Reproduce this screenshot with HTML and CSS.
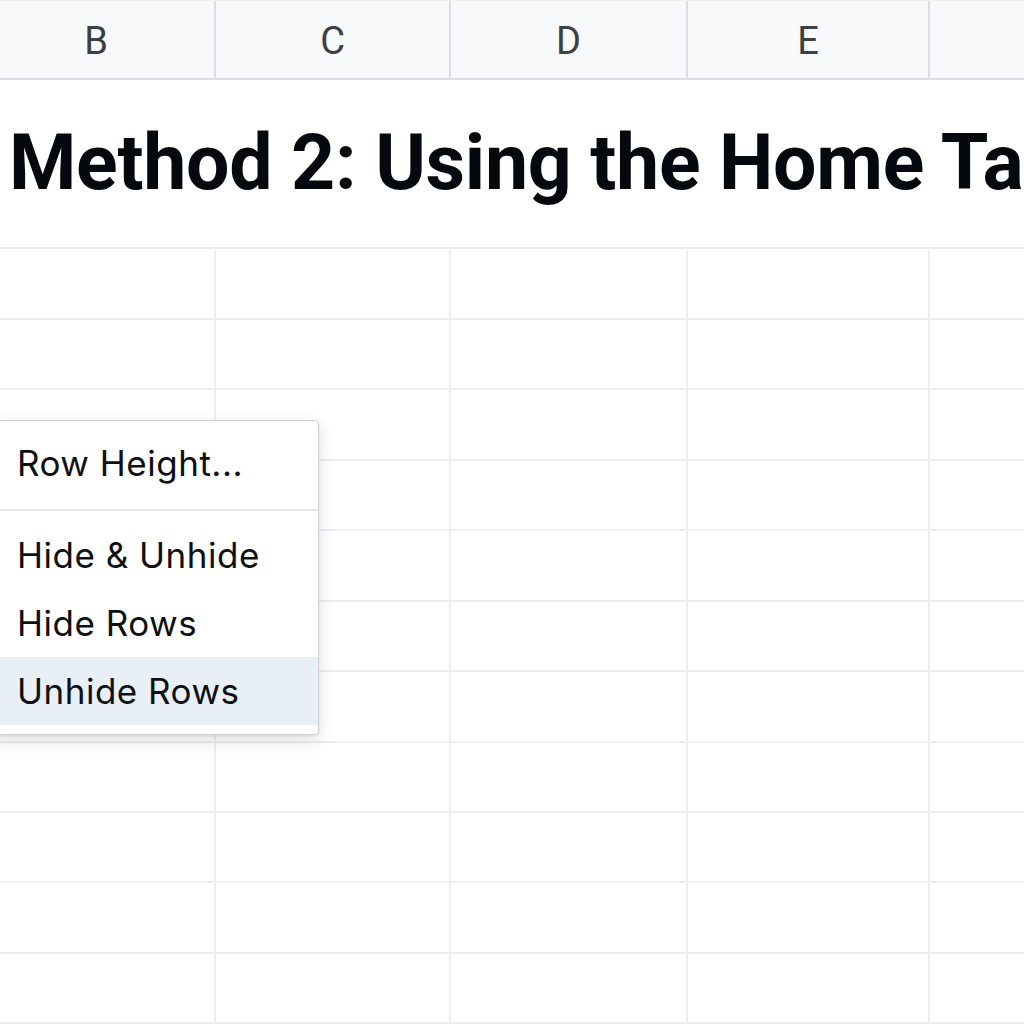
FILE: index.html
```html
<!DOCTYPE html>
<html>
<head>
<meta charset="utf-8">
<link rel="stylesheet" href="styles.css">
</head>
<body>
<div class="sheet">
  <div class="header">
    <div class="col">B</div>
    <div class="col">C</div>
    <div class="col">D</div>
    <div class="col">E</div>
    <div class="col last"></div>
  </div>
  <div class="title-row">
    <h1 class="title">Method 2: Using the Home Tab</h1>
  </div>
  <div class="grid">
    <div class="cell"></div><div class="cell"></div><div class="cell"></div><div class="cell"></div><div class="cell"></div>
    <div class="cell"></div><div class="cell"></div><div class="cell"></div><div class="cell"></div><div class="cell"></div>
    <div class="cell"></div><div class="cell"></div><div class="cell"></div><div class="cell"></div><div class="cell"></div>
    <div class="cell"></div><div class="cell"></div><div class="cell"></div><div class="cell"></div><div class="cell"></div>
    <div class="cell"></div><div class="cell"></div><div class="cell"></div><div class="cell"></div><div class="cell"></div>
    <div class="cell"></div><div class="cell"></div><div class="cell"></div><div class="cell"></div><div class="cell"></div>
    <div class="cell"></div><div class="cell"></div><div class="cell"></div><div class="cell"></div><div class="cell"></div>
    <div class="cell"></div><div class="cell"></div><div class="cell"></div><div class="cell"></div><div class="cell"></div>
    <div class="cell"></div><div class="cell"></div><div class="cell"></div><div class="cell"></div><div class="cell"></div>
    <div class="cell"></div><div class="cell"></div><div class="cell"></div><div class="cell"></div><div class="cell"></div>
    <div class="cell"></div><div class="cell"></div><div class="cell"></div><div class="cell"></div><div class="cell"></div>
  </div>
</div>
<div class="menu">
  <div class="item">Row Height...</div>
  <div class="sep"></div>
  <div class="item">Hide &amp; Unhide</div>
  <div class="item">Hide Rows</div>
  <div class="item active">Unhide Rows</div>
</div>
</body>
</html>
```
FILE: styles.css
```css
html, body {
  margin: 0;
  padding: 0;
  background: #ffffff;
  overflow: hidden;
}
body {
  width: 1024px;
  height: 1024px;
  position: relative;
  font-family: Roboto, "Liberation Sans", Arial, sans-serif;
}
.sheet {
  margin-left: -22px;
  width: 1080px;
}
.header {
  display: grid;
  grid-template-columns: 238px 235px 237px 242px 1fr;
  height: 80px;
  box-sizing: border-box;
  background: #f8f9fa;
  border-top: 1px solid #eceef0;
  border-bottom: 2px solid #dcdee1;
}
.col {
  display: flex;
  align-items: center;
  justify-content: center;
  font-family: Roboto, "Liberation Sans", sans-serif;
  font-size: 38px;
  color: #3c4043;
  border-right: 2px solid #dcdee1;
  padding-top: 2px;
}
.col.last {
  border-right: none;
}
.title-row {
  height: 168.5px;
  box-sizing: border-box;
  border-bottom: 2px solid #eceef1;
  display: flex;
  align-items: center;
  padding-left: 31px;
  white-space: nowrap;
}
.title {
  margin: 0;
  font-family: Roboto, "Liberation Sans", sans-serif;
  font-size: 77px;
  font-weight: 700;
  color: #05080c;
  letter-spacing: -0.3px;
  line-height: 1;
}
.grid {
  display: grid;
  grid-template-columns: 238px 235px 237px 242px 1fr;
  grid-auto-rows: 70.45px;
  margin-top: 1px;
}
.cell {
  box-sizing: border-box;
  border-right: 2px solid #eceef1;
  border-bottom: 2px solid #eceef1;
}
.menu {
  position: absolute;
  left: -10px;
  top: 420px;
  width: 329px;
  box-sizing: border-box;
  background: #ffffff;
  border: 1px solid #cfd1d4;
  border-radius: 4px;
  box-shadow: 0 6px 18px rgba(0, 0, 0, 0.12), 0 1px 3px rgba(0, 0, 0, 0.08);
  padding: 8px 0 9px 0;
}
.item {
  height: 68px;
  display: flex;
  align-items: center;
  padding-left: 26px;
  font-family: Inter, "Liberation Sans", sans-serif;
  font-size: 35px;
  letter-spacing: 0.5px;
  color: #0d0f12;
}
.item.active {
  background: #e8eff6;
}
.sep {
  height: 2px;
  background: #e4e6e9;
  margin: 12px 0 10px 0;
}
```
